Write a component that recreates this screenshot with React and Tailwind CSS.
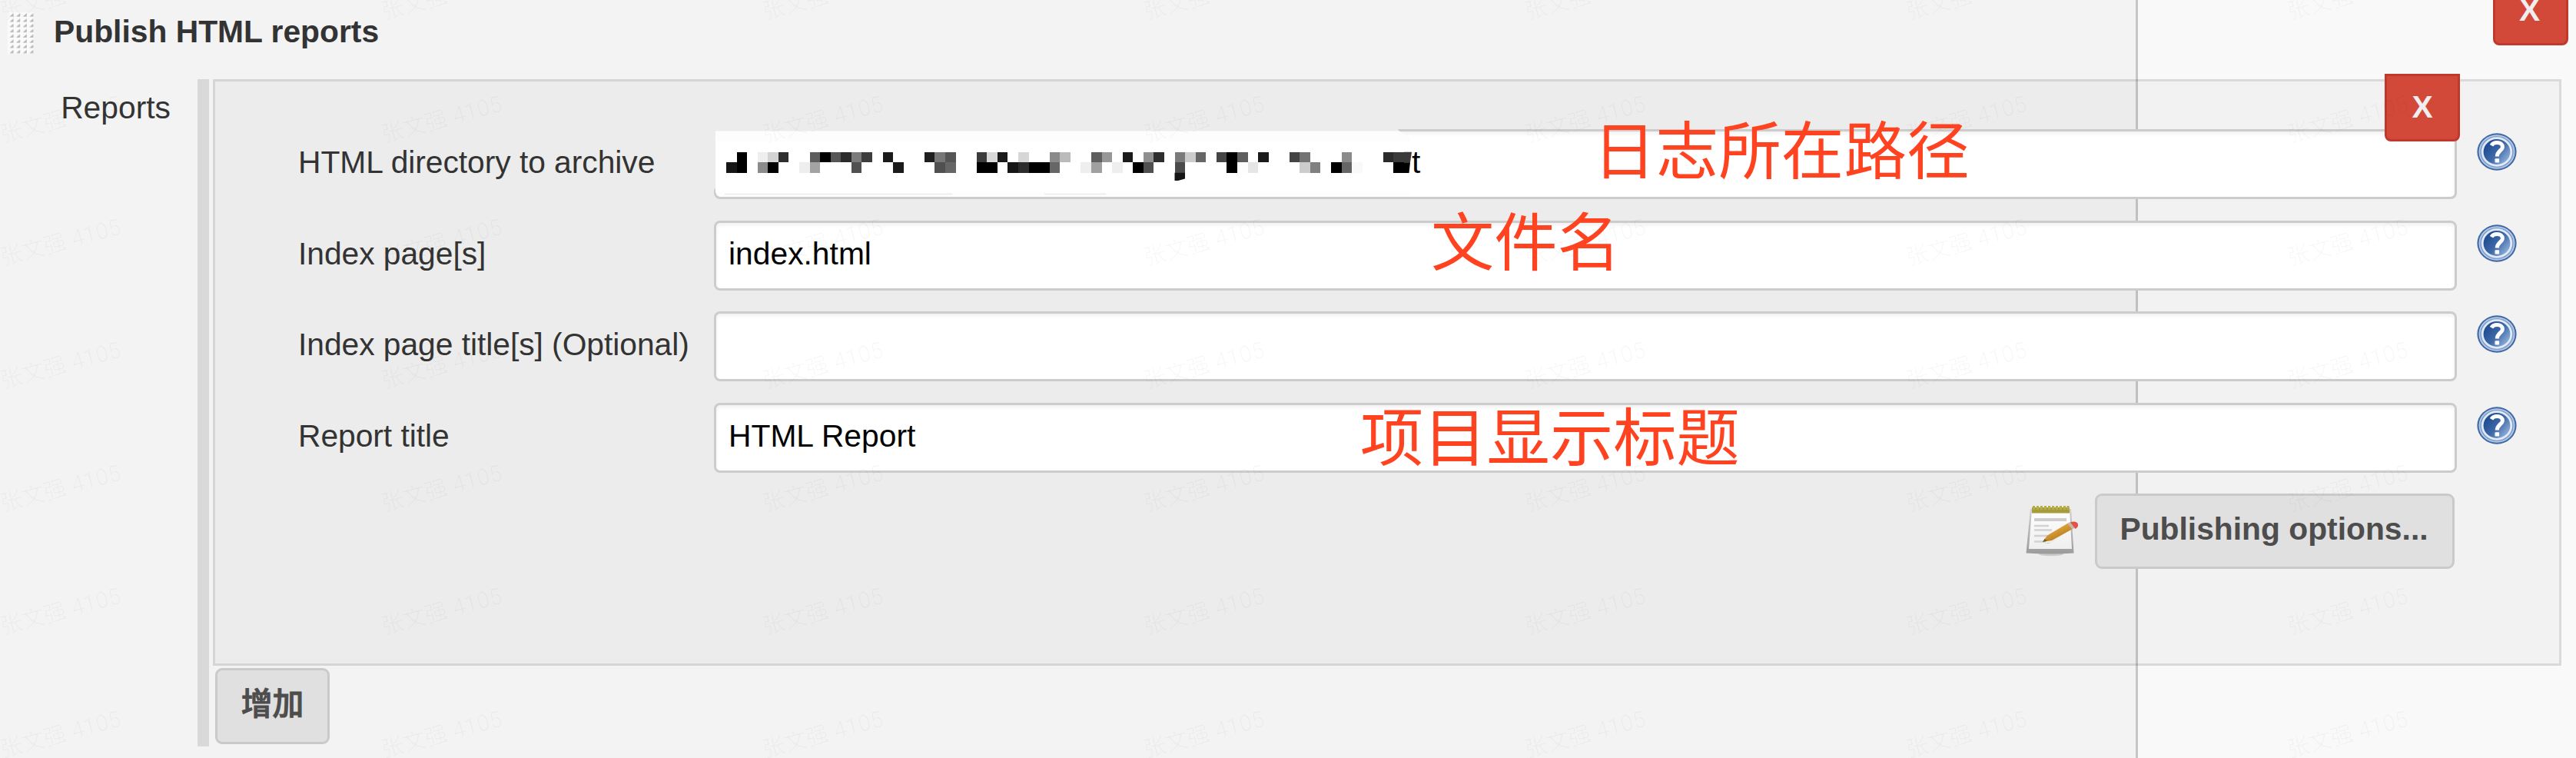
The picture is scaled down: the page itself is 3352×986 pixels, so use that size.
const WATERMARK_COLUMNS = [0, 1, 2, 3, 4, 5, 6];
const WATERMARK_ROWS = [0, 1, 2, 3, 4, 5, 6];

// Redacted path: [column, row, grey level]
const MOSAIC = [
  [1, 0, 0], [3, 0, 238], [4, 0, 211], [5, 0, 46], [8, 0, 92], [9, 0, 0], [10, 0, 85], [11, 0, 43], [12, 0, 123], [13, 0, 61],
  [15, 0, 27], [19, 0, 31], [20, 0, 119], [21, 0, 85], [24, 0, 59], [25, 0, 216], [26, 0, 26], [28, 0, 214], [31, 0, 138], [32, 0, 187],
  [35, 0, 94], [36, 0, 151], [38, 0, 27], [40, 0, 143], [41, 0, 46], [43, 0, 123], [44, 0, 204], [45, 0, 102], [47, 0, 69], [48, 0, 0],
  [49, 0, 94], [51, 0, 27], [54, 0, 68], [55, 0, 115], [59, 0, 138], [63, 0, 43], [64, 0, 58],
  [0, 1, 22], [1, 1, 0], [3, 1, 139], [4, 1, 0], [7, 1, 238], [8, 1, 163], [12, 1, 80], [16, 1, 27], [20, 1, 80], [21, 1, 102],
  [24, 1, 0], [25, 1, 0], [27, 1, 22], [28, 1, 43], [29, 1, 0], [30, 1, 0], [31, 1, 102], [34, 1, 238], [35, 1, 160], [37, 1, 238],
  [39, 1, 0], [40, 1, 80], [43, 1, 75], [48, 1, 0], [49, 1, 253], [50, 1, 230], [55, 1, 204], [56, 1, 128], [58, 1, 0], [59, 1, 102],
  [60, 1, 249], [64, 1, 0],
];

const CELL = 13.57;

function RedactedPath() {
  return (
    <svg width="920" height="91" viewBox="0 0 920 91" className="absolute -left-[3px] -top-[3px]">
      <path d="M0 0H890L892 3H2V76L0 80Z" fill="#ececec" />
      <path d="M2 2.5H892L906 12V86H5Q2 84 2 80Z" fill="#fdfdfd" />
      <path d="M2 16H906V82H2Z" fill="#fff" />
      <path d="M14 84.5H310M430 84.5H510" stroke="#ececec" strokeWidth="1.5" />
      <g shapeRendering="crispEdges">
        {MOSAIC.map(([column, row, level]) => (
          <rect
            key={`${column}-${row}`}
            x={16 + column * CELL}
            y={29.7 + row * CELL}
            width={CELL}
            height={CELL}
            fill={`rgb(${level},${level},${level})`}
          />
        ))}
      </g>
      <path d="M898 29.7H908L906 43.3H898Z" fill="#3a3a3a" />
      <path d="M898 43.3H906L904.5 56.9H898Z" fill="#000" />
      <path d="M599.5 56.8H613V64.5L604 67H599.5Z" fill="#151515" />
    </svg>
  );
}

function HelpIcon() {
  return (
    <svg width="52" height="49" viewBox="0 0 52 49" preserveAspectRatio="none" className="mt-[5px] shrink-0">
      <defs>
        <linearGradient id="help-fill" x1="0.1" y1="0.2" x2="0.95" y2="0.85">
          <stop offset="0.1" stopColor="#234f93" />
          <stop offset="0.5" stopColor="#3f6aa8" />
          <stop offset="1" stopColor="#9dbbe0" />
        </linearGradient>
      </defs>
      <ellipse cx="26" cy="24.5" rx="25.6" ry="24.2" fill="#3f68a6" />
      <ellipse cx="26" cy="24.5" rx="22.6" ry="21.4" fill="#7d9cca" stroke="#b4c8e4" strokeWidth="1.8" />
      <ellipse cx="26" cy="24.5" rx="18.8" ry="17.8" fill="url(#help-fill)" stroke="#dfe9f7" strokeWidth="2.8" />
      <path d="M19 16.2C20.5 13.4 23.4 12.5 26.3 12.5C30.6 12.5 33.4 14.6 33.4 17.9C33.4 22.8 26.5 23.4 26.3 30.5" fill="none" stroke="#fff" strokeWidth="5" />
      <rect x="23.5" y="33.2" width="5.6" height="5.4" rx="1" fill="#fff" />
    </svg>
  );
}

function NotepadIcon() {
  return (
    <svg width="70" height="68" viewBox="0 0 70 68" className="mt-[15px] shrink-0">
      <defs>
        <linearGradient id="paper" x1="0" y1="0" x2="0" y2="1">
          <stop offset="0" stopColor="#ffffff" />
          <stop offset="1" stopColor="#efefef" />
        </linearGradient>
        <linearGradient id="edge" x1="0" y1="0" x2="0" y2="1">
          <stop offset="0" stopColor="#cfcfcf" />
          <stop offset="1" stopColor="#9c9c9c" />
        </linearGradient>
        <linearGradient id="pencil" x1="0" y1="0" x2="0.7" y2="1">
          <stop offset="0.2" stopColor="#eeb544" />
          <stop offset="1" stopColor="#a86c18" />
        </linearGradient>
      </defs>
      <ellipse cx="33" cy="63.5" rx="16" ry="2.8" fill="#cacaca" />
      <path d="M6 5H59L62.5 62.5Q33 64.5 0.5 62.5Z" fill="url(#edge)" />
      <path d="M8 5H57L60 57H4Z" fill="url(#paper)" />
      <rect x="8" y="3" width="49" height="7.5" fill="#a79c3c" />
      <path d="M10.5 1V6M15.5 1V6M20.5 1V6M25.5 1V6M30.5 1V6M35.5 1V6M40.5 1V6M45.5 1V6M50.5 1V6M55 1V6" stroke="#b9ad48" strokeWidth="3" />
      <path d="M11 19H53" stroke="#cdcdcd" strokeWidth="4" />
      <path d="M11 27H30M11 32.5H34M11 40H28M11 47.5H26" stroke="#d2d2d2" strokeWidth="2.6" />
      <path d="M24 50L34 48L50 38L30 50Z" fill="#c9c9c9" />
      <path d="M22 48L28 39.5L55 23.5L61 31L34 46Z" fill="url(#pencil)" />
      <path d="M22 48L24.5 44L28 46.5Z" fill="#6b5a34" />
      <path d="M54.5 24L58 21.8L64 29.5L60.5 31.5Z" fill="#c4b8ae" />
      <path d="M58 22.5Q64 20 67.5 23.5Q69.5 28 64.5 31Z" fill="#e25046" />
    </svg>
  );
}

function Field({ label, value, help = true, children }) {
  return (
    <div className="flex h-[91px] items-start">
      <label className="w-[541px] shrink-0 pt-[20px] leading-[46px] tracking-[-0.05px] text-[#333]">{label}</label>
      <div className="relative h-[91px] w-[1px] grow rounded-[8px] border-[3px] border-[#ccc] bg-white pl-[16px] pt-[17px] leading-[46px] text-black shadow-[inset_0_3px_5px_rgba(0,0,0,0.06)]">
        {value}
        {children}
      </div>
      <div className="flex w-[133px] shrink-0 pl-[26px]">{help && <HelpIcon />}</div>
    </div>
  );
}

function Annotation({ className, children }) {
  return (
    <span className={`absolute whitespace-nowrap font-['Noto_Sans_CJK_SC',sans-serif] leading-[90px] text-[#ff4220] ${className}`}>
      {children}
    </span>
  );
}

function Grip() {
  return (
    <svg width="34" height="54" viewBox="0 0 34 54">
      <defs>
        <pattern id="grip-dots" width="8.6" height="6.8" patternUnits="userSpaceOnUse">
          <rect width="8.6" height="6.8" fill="#fafafa" />
          <path d="M2.5 5.5L7.5 1.2V5.5Z" fill="#b4b4b4" />
        </pattern>
      </defs>
      <rect width="34" height="54" fill="url(#grip-dots)" />
    </svg>
  );
}

function Watermarks() {
  return (
    <div className="pointer-events-none absolute inset-0 z-20 overflow-hidden">
      {WATERMARK_ROWS.map((row) =>
        WATERMARK_COLUMNS.map((column) => (
          <span
            key={`${row}-${column}`}
            className="absolute flex h-[40px] w-[164px] -rotate-[15deg] items-center justify-center whitespace-nowrap font-['Roboto','Noto_Sans_CJK_SC',sans-serif] text-[29px] font-light tracking-[0.4px] text-black/[0.045]"
            style={{ left: column * 496 - 3, top: row * 160 - 24 }}
          >
            张文强 4105
          </span>
        ))
      )}
    </div>
  );
}

export default function App() {
  return (
    <div className="relative h-[986px] w-[3352px] overflow-hidden bg-[#f9f9f9] font-['Liberation_Sans','Noto_Sans_CJK_SC',sans-serif] text-[40.8px]">
      <div className="absolute left-0 top-0 h-full w-[2782px] border-r-[3px] border-[#c6c6c6] bg-[#f3f3f3]" />

      <div className="relative flex h-full flex-col">
        <header className="flex h-[103px] shrink-0 items-start pr-[10px]">
          <div className="w-[70px] pl-[10px] pt-[16px]">
            <Grip />
          </div>
          <h2 className="grow pt-[18px] font-bold leading-[46px] text-[#333]">Publish HTML reports</h2>
          <button className="-mt-[29px] h-[88px] w-[98px] rounded-b-[8px] border-[3px] border-[#bf3a2d] bg-[#d24939] pb-[4px] pr-[3px] font-bold leading-[46px] text-[#f0eeee]">
            X
          </button>
        </header>

        <div className="flex h-[868px] shrink-0">
          <div className="w-[257px] shrink-0 pr-[35px] pt-[14px] text-right leading-[46px] text-[#333]">Reports</div>
          <div className="mr-[5px] w-[15px] shrink-0 bg-[#d9d9d9]" />

          <div className="w-[3056px]">
            <section className="relative flex h-[763px] w-full flex-col gap-[27.7px] border-[3px] border-black/[0.12] bg-black/[0.028] bg-clip-padding pl-[108px] pt-[62px]">
              <Field label="HTML directory to archive">
                <RedactedPath />
                <span className="absolute left-[905px] top-[17px]">t</span>
              </Field>
              <Field label="Index page[s]" value="index.html" />
              <Field label="Index page title[s] (Optional)" value="" />
              <Field label="Report title" value="HTML Report" />

              <div className="-mt-[1px] flex h-[98px] items-start justify-end pr-[136px]">
                <NotepadIcon />
                <button className="ml-[20px] h-[98px] w-[468px] rounded-[9px] border-[3px] border-[#cacaca] bg-[#e0e0e0] pb-[6px] pr-[2px] font-bold leading-[46px] text-[#4d4d4d]">
                  Publishing options...
                </button>
              </div>

              <button className="absolute right-[129px] -top-[10px] h-[88px] w-[98px] rounded-b-[8px] border-[3px] border-[#bf3a2d] bg-[#d24939] pb-[3px] font-bold leading-[46px] text-[#f0eeee]">
                X
              </button>
            </section>

            <button className="ml-[3px] mt-[3px] block h-[99px] w-[149px] rounded-[9px] border-[3px] border-[#cacaca] bg-[#e0e0e0] pb-[6px] font-medium leading-[46px] text-[#4d4d4d] [-webkit-text-stroke:1px_#4d4d4d]">
              增加
            </button>
          </div>
        </div>
      </div>

      <Watermarks />
      <div className="pointer-events-none absolute inset-0 z-30">
        <Annotation className="left-[2073px] top-[146px] text-[81.6px]">日志所在路径</Annotation>
        <Annotation className="left-[1862px] top-[265px] text-[82.3px]">文件名</Annotation>
        <Annotation className="left-[1770px] top-[519px] text-[82.3px]">项目显示标题</Annotation>
      </div>
    </div>
  );
}
